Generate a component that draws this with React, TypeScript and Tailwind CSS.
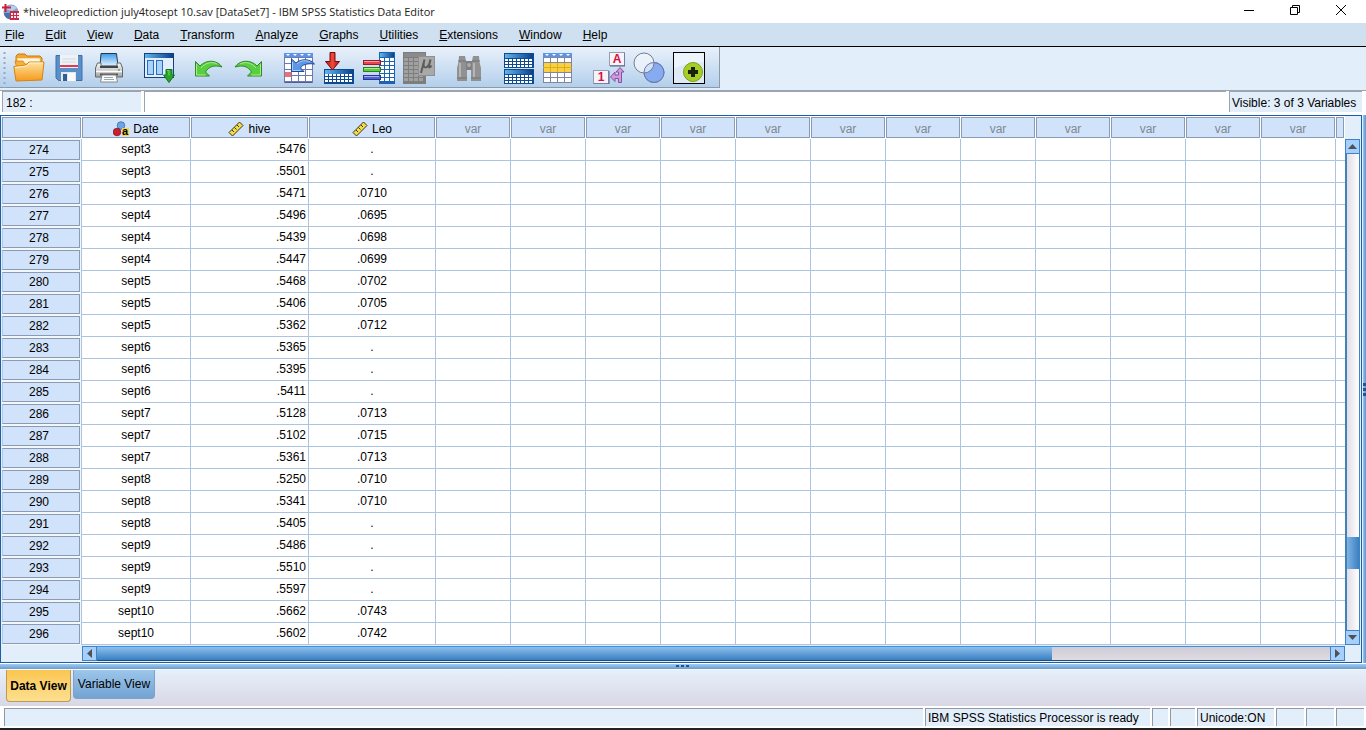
import React from "react";

type Row = { id: number; date: string; hive: string; leo: string };

const rows: Row[] = [
  { id: 274, date: "sept3", hive: ".5476", leo: "." },
  { id: 275, date: "sept3", hive: ".5501", leo: "." },
  { id: 276, date: "sept3", hive: ".5471", leo: ".0710" },
  { id: 277, date: "sept4", hive: ".5496", leo: ".0695" },
  { id: 278, date: "sept4", hive: ".5439", leo: ".0698" },
  { id: 279, date: "sept4", hive: ".5447", leo: ".0699" },
  { id: 280, date: "sept5", hive: ".5468", leo: ".0702" },
  { id: 281, date: "sept5", hive: ".5406", leo: ".0705" },
  { id: 282, date: "sept5", hive: ".5362", leo: ".0712" },
  { id: 283, date: "sept6", hive: ".5365", leo: "." },
  { id: 284, date: "sept6", hive: ".5395", leo: "." },
  { id: 285, date: "sept6", hive: ".5411", leo: "." },
  { id: 286, date: "sept7", hive: ".5128", leo: ".0713" },
  { id: 287, date: "sept7", hive: ".5102", leo: ".0715" },
  { id: 288, date: "sept7", hive: ".5361", leo: ".0713" },
  { id: 289, date: "sept8", hive: ".5250", leo: ".0710" },
  { id: 290, date: "sept8", hive: ".5341", leo: ".0710" },
  { id: 291, date: "sept8", hive: ".5405", leo: "." },
  { id: 292, date: "sept9", hive: ".5486", leo: "." },
  { id: 293, date: "sept9", hive: ".5510", leo: "." },
  { id: 294, date: "sept9", hive: ".5597", leo: "." },
  { id: 295, date: "sept10", hive: ".5662", leo: ".0743" },
  { id: 296, date: "sept10", hive: ".5602", leo: ".0742" },
];

const menus = [
  "File",
  "Edit",
  "View",
  "Data",
  "Transform",
  "Analyze",
  "Graphs",
  "Utilities",
  "Extensions",
  "Window",
  "Help",
];

const emptyCols = Array.from({ length: 12 }, (_, i) => i);

const Icon: React.FC<{ children: React.ReactNode }> = ({ children }) => (
  <svg width="32" height="32" viewBox="0 0 32 32" aria-hidden="true">
    {children}
  </svg>
);

// white cells on a coloured sheet, shared by the grid-like toolbar icons
const Cells: React.FC<{
  x: number;
  y: number;
  cols: number;
  rows: number;
  w: number;
  h: number;
  fill?: string;
}> = ({ x, y, cols, rows: n, w, h, fill = "#fff" }) => (
  <>
    {Array.from({ length: cols * n }, (_, i) => (
      <rect
        key={i}
        x={x + (i % cols) * (w + 1)}
        y={y + Math.floor(i / cols) * (h + 1)}
        width={w}
        height={h}
        fill={fill}
      />
    ))}
  </>
);

const Defs: React.FC = () => (
  <svg width="0" height="0" className="absolute" aria-hidden="true">
    <defs>
      <linearGradient id="orange" x1="0" y1="0" x2="0" y2="1">
        <stop offset="0" stopColor="#ffe2a0" />
        <stop offset="1" stopColor="#f59a1b" />
      </linearGradient>
      <linearGradient id="blueBar" x1="0" y1="0" x2="1" y2="0">
        <stop offset="0" stopColor="#5fb4ee" />
        <stop offset="1" stopColor="#0a3f8c" />
      </linearGradient>
      <linearGradient id="paper" x1="0" y1="0" x2="0" y2="1">
        <stop offset="0" stopColor="#3f9ae8" />
        <stop offset="1" stopColor="#e4f3ff" />
      </linearGradient>
      <linearGradient id="green" x1="0" y1="0" x2="0" y2="1">
        <stop offset="0" stopColor="#8ee05a" />
        <stop offset="1" stopColor="#1fa32a" />
      </linearGradient>
      <linearGradient id="grey" x1="0" y1="0" x2="0" y2="1">
        <stop offset="0" stopColor="#fafafa" />
        <stop offset="1" stopColor="#a4a4a4" />
      </linearGradient>
      <linearGradient id="blueArrow" x1="0" y1="0" x2="1" y2="1">
        <stop offset="0" stopColor="#2e63c0" />
        <stop offset="1" stopColor="#8ec4fa" />
      </linearGradient>
      <linearGradient id="red" x1="0" y1="0" x2="1" y2="0">
        <stop offset="0" stopColor="#b51212" />
        <stop offset="0.5" stopColor="#f04a3c" />
        <stop offset="1" stopColor="#a80e0e" />
      </linearGradient>
    </defs>
  </svg>
);

const OpenIcon = () => (
  <Icon>
    <path d="M3 9V4l2-2h7l2 2h13l2 2v6H3z" fill="#f7a62c" stroke="#c97a14" />
    <path d="M4 6h23l1 7H4z" fill="#fff6dc" stroke="#e0a24a" strokeWidth=".6" />
    <path d="M2 9h8l2 3h13v5H4z" fill="#f9b03a" stroke="#d68412" strokeWidth=".8" />
    <path d="M.8 14.500 13 13l3-3h15l-2 18-26 1z" fill="url(#orange)" stroke="#d68412" />
    <path d="M2 15.500 13.500 14l3-3h13.500" fill="none" stroke="#fff3cf" />
  </Icon>
);

const SaveIcon = () => (
  <Icon>
    <path d="M3 3.500h26v25H5.500L3 26z" fill="#5a8fc9" stroke="#3f6ea8" />
    <rect x="7" y="3" width="18" height="13" fill="#eef2f6" />
    <rect x="7" y="13" width="18" height="2" fill="#e23a55" />
    <path d="M9 7h14M9 10h14" stroke="#d3dae2" />
    <rect x="8" y="20" width="15" height="9" fill="#e3e8ec" />
    <rect x="10" y="22" width="4" height="7" fill="#335d93" />
    <rect x="15" y="21" width="7" height="8" fill="#fafafa" />
  </Icon>
);

const PrintIcon = () => (
  <Icon>
    <path d="M8 1.500h15.500L25 14H7z" fill="url(#paper)" stroke="#23384f" />
    <path d="M4.500 11H8v4h16v-4h3.500l2 5v9h-27v-9z" fill="url(#grey)" stroke="#666" />
    <rect x="7" y="14" width="18" height="2" fill="#444" />
    <path d="M3 19.500h26" stroke="#fff" strokeWidth="1.500" />
    <path d="M7 22.500h18" stroke="#555" strokeWidth="2" />
    <path d="M9 23h14l1.500 7H7.500z" fill="#fbfbfb" stroke="#888" />
    <path d="M11 25.500h9M11 27.500h10" stroke="#9aa" />
    <circle cx="26" cy="18" r="1" fill="#4b6" />
  </Icon>
);

const RecallIcon = () => (
  <Icon>
    <rect x="1.500" y="1.500" width="29" height="24" fill="#fff" stroke="#15407e" />
    <rect x="2" y="2" width="28" height="4" fill="url(#blueBar)" />
    <rect x="2" y="6" width="28" height="19" fill="#e4eefb" />
    <rect x="4.500" y="8.500" width="6" height="14" fill="#a8d3fa" stroke="#2a6cc0" />
    <rect x="13.500" y="8.500" width="6" height="14" fill="#a8d3fa" stroke="#2a6cc0" />
    <path d="M23 17.500h6v5.500h2.500L26 30.500 20.500 23H23z" fill="#27a52c" stroke="#14701c" />
    <path d="M24 18.500h2v5" fill="none" stroke="#7ed860" />
  </Icon>
);

const UndoIcon = () => (
  <Icon>
    <path
      d="M2.500 9.500v14.500h14l-4-4c3-5 8-7.500 16.500-5C24 7.500 13 7.500 7 14z"
      fill="#58cf3e"
      stroke="#35852f"
    />
    <path d="M3.500 12v11h9M8 16c4-5 11-7 16-4" fill="none" stroke="#a8ee8c" />
  </Icon>
);

const RedoIcon = () => (
  <Icon>
    <path
      d="M28.500 9.500v14.500h-14l4-4c-3-5-8-7.500-16.500-5C7 7.500 18 7.500 24 14z"
      fill="#58cf3e"
      stroke="#35852f"
    />
    <path d="M27.500 12v11h-9M23 16c-4-5-11-7-16-4" fill="none" stroke="#a8ee8c" />
  </Icon>
);

const GoToCaseIcon = () => (
  <Icon>
    <rect x="1" y="1" width="29" height="30" fill="#7078b0" />
    <rect x="1" y="1" width="29" height="4" fill="#5d95e6" />
    <Cells x={2} y={6} cols={4} rows={4} w={6} h={5} />
    <rect x="2" y="30" width="27" height="1" fill="#555b94" />
    <path d="M3 2h4l-2 2zM10 2h4l-2 2zM17 2h4l-2 2zM24 2h4l-2 2z" fill="#fff" />
    <rect x="2" y="20" width="6" height="5" fill="#e8707a" />
    <path
      d="M8.500 7v12.500H21l-3.500-3.500c1.500-3 6-5 14-4C27 6.500 18 6.500 13 11z"
      fill="#5d97e6"
      stroke="#1f4a9c"
    />
    <path d="M9.500 10v8.500h8M14 12c4-4 9-4 13-2" fill="none" stroke="#a5ccf8" />
  </Icon>
);

const ImportIcon = () => (
  <Icon>
    <rect x="1" y="17" width="30" height="15" fill="#0e4a92" />
    <rect x="2" y="18" width="28" height="4" fill="url(#blueBar)" />
    <Cells x={2} y={22} cols={7} rows={3} w={3} h={2} />
    <path d="M7 .5h5v9h4.500L9.500 18 2.500 9.500H7z" fill="url(#red)" stroke="#7d0a0a" />
  </Icon>
);

const GoToVariableIcon = () => (
  <Icon>
    <rect x="16" y="0" width="16" height="32" fill="#1d63b4" />
    <rect x="17" y="1" width="14" height="4" fill="url(#blueBar)" />
    <Cells x={17} y={6} cols={3} rows={6} w={4} h={3} />
    <rect x=".5" y="8.500" width="17" height="4" fill="#e34652" stroke="#a81522" />
    <rect x=".5" y="15.500" width="17" height="4" fill="#65c93e" stroke="#23851b" />
    <rect x=".5" y="23.500" width="17" height="4" fill="#5262cf" stroke="#2632a0" />
    <path d="M1 9.500h15M1 16.500h15M1 24.500h15" stroke="#fff" opacity=".5" />
  </Icon>
);

const StatsIcon = () => (
  <Icon>
    <rect x="0" y="0" width="23" height="32" fill="#7d7d7d" />
    <Cells x={1} y={6} cols={4} rows={6} w={4} h={3} fill="#a0a0a0" />
    <rect x="1" y="1" width="21" height="4" fill="#8b8b8b" />
    <rect x="15.500" y="4.500" width="16" height="19" fill="#a9a9a9" stroke="#8f8f8f" />
    <path
      d="M21.500 7.500 18 21M21 10c-2 7 3.500 7 5.500 1l1-3.500-1.500 6c-.5 2.500 1 2.500 2.500 0"
      fill="none"
      stroke="#5c5c5c"
      strokeWidth="2"
    />
  </Icon>
);

const FindIcon = () => (
  <Icon>
    <path d="M6 4h6l1 5 1 6v14H4V16l1.500-6zM20 4h6l.5 6L28 16v13H18V15l1-6z" fill="#919191" />
    <path d="M13 9h6v9h-6z" fill="#7f7f7f" />
    <path d="M7 11v14M21 11v14" stroke="#b5b5b5" strokeWidth="2" />
    <path d="M4 26h10M18 26h10M5 9h8M19 9h8" stroke="#747474" />
    <circle cx="16" cy="13" r="2" fill="#aaa" />
  </Icon>
);

const SplitIcon = () => (
  <Icon>
    <rect x="1" y="1" width="30" height="15" fill="#0e4a92" />
    <rect x="2" y="2" width="28" height="4" fill="url(#blueBar)" />
    <Cells x={2} y={7} cols={7} rows={3} w={3} h={2} />
    <rect x="1" y="17" width="30" height="15" fill="#0e4a92" />
    <rect x="2" y="18" width="28" height="4" fill="url(#blueBar)" />
    <Cells x={2} y={23} cols={7} rows={3} w={3} h={2} />
  </Icon>
);

const SelectIcon = () => (
  <Icon>
    <rect x="0" y="1" width="29" height="30" fill="#8285a0" />
    <rect x="0" y="1" width="29" height="4" fill="#5d95e6" />
    <Cells x={1} y={6} cols={4} rows={5} w={6} h={4} />
    <path d="M2 2h4l-2 2zM9 2h4l-2 2zM16 2h4l-2 2zM23 2h4l-2 2z" fill="#fff" />
    <rect x="1" y="11" width="27" height="9" fill="#f8d040" />
    <path d="M0 15.500h29M7.500 11v9M14.500 11v9M21.500 11v9" stroke="#d9ac24" />
  </Icon>
);

const LabelsIcon = () => (
  <Icon>
    <rect x="16.500" y=".5" width="15" height="13" fill="#f6f4f8" stroke="#9b9bb0" />
    <path d="M17 14h15V1" fill="none" stroke="#4e6484" />
    <text
      x="24"
      y="11"
      textAnchor="middle"
      fontFamily="Liberation Sans, sans-serif"
      fontSize="12"
      fontWeight="700"
      fill="#d6103f"
    >
      A
    </text>
    <rect x=".5" y="18.500" width="15" height="13" fill="#f6f4f8" stroke="#9b9bb0" />
    <path d="M1 32h15V19" fill="none" stroke="#4e6484" />
    <text
      x="8"
      y="29"
      textAnchor="middle"
      fontFamily="Liberation Sans, sans-serif"
      fontSize="12"
      fontWeight="700"
      fill="#d6103f"
    >
      1
    </text>
    <path
      d="M27 15.500 31 20h-2.500v10.500h-3v-4H22v3l-4.500-4.500 4.500-5v3h3.500V20H23z"
      fill="#cf9bdc"
      stroke="#8b4fa0"
    />
  </Icon>
);

const SetsIcon = () => (
  <Icon>
    <circle cx="21" cy="20.500" r="10" fill="#86abf0" stroke="#5b76b0" />
    <circle cx="11" cy="11" r="10" fill="#f3f7fc" fillOpacity=".7" stroke="#777d88" />
    <circle cx="21" cy="20.500" r="10" fill="none" stroke="#6c7fae" />
  </Icon>
);

const CustomIcon = () => (
  <Icon>
    <rect x=".5" y=".5" width="31" height="31" fill="#dfeaf6" stroke="#000" />
    <path d="M1 1h30v9q-15 0-30 6z" fill="#edf4fb" />
    <circle cx="20" cy="20" r="9.500" fill="#a6cf26" stroke="#7a9d1c" />
    <path d="M18 15h4v3h3v4h-3v3h-4v-3h-3v-4h3z" fill="#1c2410" />
  </Icon>
);

const toolGroups: { label: string; icon: React.FC }[][] = [
  [
    { label: "Open", icon: OpenIcon },
    { label: "Save", icon: SaveIcon },
    { label: "Print", icon: PrintIcon },
  ],
  [{ label: "Recall dialogs", icon: RecallIcon }],
  [
    { label: "Undo", icon: UndoIcon },
    { label: "Redo", icon: RedoIcon },
  ],
  [
    { label: "Go to case", icon: GoToCaseIcon },
    { label: "Go to data", icon: ImportIcon },
    { label: "Variables", icon: GoToVariableIcon },
    { label: "Descriptives", icon: StatsIcon },
  ],
  [{ label: "Find", icon: FindIcon }],
  [
    { label: "Split file", icon: SplitIcon },
    { label: "Select cases", icon: SelectIcon },
  ],
  [
    { label: "Value labels", icon: LabelsIcon },
    { label: "Variable sets", icon: SetsIcon },
    { label: "Customize toolbar", icon: CustomIcon },
  ],
];

const AppLogo = () => (
  <svg width="18" height="18" viewBox="0 0 18 18" aria-hidden="true">
    <circle cx="9" cy="9" r="7.500" fill="#7fa3cf" />
    <path d="M3 6a7.500 7.500 0 0 1 12-1l-5 3z" fill="#b9cfe8" />
    <path d="M2 11a7.500 7.500 0 0 0 7 5.500V10H2z" fill="#4f6ea8" />
    <path d="M3.500 1v8M0 4.500h9" stroke="#d01c3c" strokeWidth="2" />
    <rect x="8" y="8" width="9" height="9" fill="#c62a48" />
    <Cells x={9} y={10} cols={3} rows={2} w={2} h={2} fill="#fbe4e8" />
  </svg>
);

const NominalIcon = () => (
  <svg width="16" height="16" viewBox="0 0 16 16" aria-hidden="true">
    <circle cx="8" cy="4.500" r="3.800" fill="#6ea6e4" stroke="#2f5e9e" strokeWidth=".7" />
    <circle cx="4" cy="11" r="3.800" fill="#c8202c" stroke="#7d0d16" strokeWidth=".7" />
    <rect x="9" y="7" width="7" height="8" fill="#f4d64a" />
    <text
      x="12"
      y="14"
      textAnchor="middle"
      fontFamily="Liberation Sans, sans-serif"
      fontSize="11"
      fontWeight="700"
    >
      a
    </text>
  </svg>
);

const RulerIcon = () => (
  <svg width="16" height="16" viewBox="0 0 16 16" aria-hidden="true">
    <path d="M1 11.500 11.500 1 15 4.500 4.500 15z" fill="#f2dc4e" stroke="#3d3608" />
    <path d="m4 9 2 2M6.500 6.500l2 2M9 4l2 2" stroke="#3d3608" />
  </svg>
);

const HeaderCell: React.FC<{ children?: React.ReactNode; muted?: boolean }> = ({ children, muted }) => (
  <th scope="col" className="bg-white p-0 py-px font-normal">
    <div
      className={
        muted
          ? "mr-px flex h-[21px] items-center justify-center border border-[#8b9bb3] bg-[#d0e3fb] pt-0.5 text-[#808893]"
          : "mr-px flex h-[21px] items-center justify-center gap-1 border border-[#8b9bb3] bg-[#d0e3fb] pt-0.5"
      }
    >
      {children}
    </div>
  </th>
);

const ArrowButton: React.FC<{ label: string; d: string }> = ({ label, d }) => (
  <button
    type="button"
    aria-label={label}
    className="flex h-[15px] w-[15px] shrink-0 items-center justify-center border border-[#3f83c4] bg-[#a6cffb]"
  >
    <svg width="9" height="9" viewBox="0 0 9 9" aria-hidden="true">
      <path d={d} fill="#4c5258" />
    </svg>
  </button>
);

const TitleBar: React.FC = () => (
  <header className="flex h-[23px] shrink-0 items-center bg-white pl-[2px]">
    <AppLogo />
    <h1 className="ml-[3px] grow font-['Open_Sans','Noto_Sans',sans-serif] text-[11px] text-[#222]">
      *hiveleoprediction july4tosept 10.sav [DataSet7] - IBM SPSS Statistics Data Editor
    </h1>
    <div className="flex pr-0.5 pb-1">
      <button type="button" aria-label="Minimize" className="flex w-[46px] justify-center">
        <svg width="12" height="12" viewBox="0 0 12 12">
          <path d="M1 6.500h10" stroke="#000" />
        </svg>
      </button>
      <button type="button" aria-label="Restore" className="flex w-[46px] justify-center">
        <svg width="12" height="12" viewBox="0 0 12 12" fill="none" stroke="#000">
          <path d="M1.500 3.500h7v7h-7zM3.500 3.500v-2h7v7h-2" />
        </svg>
      </button>
      <button type="button" aria-label="Close" className="flex w-[46px] justify-center">
        <svg width="12" height="12" viewBox="0 0 12 12">
          <path d="m1 1 10 10M11 1 1 11" stroke="#000" />
        </svg>
      </button>
    </div>
  </header>
);

const MenuBar: React.FC = () => (
  <nav className="flex h-6 shrink-0 items-center gap-[21px] border-b border-black bg-[#cfe0f1] pl-[5px]">
    {menus.map((m) => (
      <button key={m} type="button">
        <span className="underline">{m[0]}</span>
        {m.slice(1)}
      </button>
    ))}
  </nav>
);

const ToolBar: React.FC = () => (
  <div className="flex h-[44px] shrink-0 border-b border-[#9aa5b1] bg-[#e3eefb]">
    <div className="mb-0.5 flex items-start border-r border-b border-[#8d99a6] bg-linear-to-b from-[#e9f1fb] to-[#b3cfeb] pt-[5px] pr-[10px]">
      <svg width="9" height="36" viewBox="0 0 9 36" aria-hidden="true">
        <path d="M4.500 0v36" stroke="#94a9c2" strokeWidth="2" strokeDasharray="2 3" />
      </svg>
      <div className="flex gap-[10px]">
        {toolGroups.map((group) => (
          <div key={group[0].label} className="flex">
            {group.map(({ label, icon: ToolIcon }) => (
              <button key={label} type="button" aria-label={label} className="flex w-10 justify-center">
                <ToolIcon />
              </button>
            ))}
          </div>
        ))}
      </div>
    </div>
  </div>
);

const CellEditor: React.FC = () => (
  <div className="flex h-6 shrink-0 gap-[3px] bg-white pr-1 pb-[3px] pl-[2px]">
    <label
      htmlFor="cell-value"
      className="flex w-[139px] items-center border-t border-l border-[#9aa5b1] bg-[#e3eefb] pt-px pl-[3px]"
    >
      182 :
    </label>
    <input id="cell-value" className="min-w-0 grow border-t border-l border-[#9aa5b1] bg-white px-1 outline-none" />
    <div className="flex w-[133px] items-center border-t border-l border-[#9aa5b1] bg-[#e3eefb] pt-px pl-[2px] whitespace-nowrap">
      Visible: 3 of 3 Variables
    </div>
  </div>
);

const DataTable: React.FC = () => (
  <table className="w-full table-fixed border-separate border-spacing-0 bg-white">
    <colgroup>
      <col className="w-[80px]" />
      <col className="w-[109px]" />
      <col className="w-[118px]" />
      <col className="w-[127px]" />
      {emptyCols.map((c) => (
        <col key={c} className="w-[75px]" />
      ))}
      <col />
    </colgroup>
    <thead>
      <tr className="h-[23px]">
        <HeaderCell />
        <HeaderCell>
          <NominalIcon />
          Date
        </HeaderCell>
        <HeaderCell>
          <RulerIcon />
          hive
        </HeaderCell>
        <HeaderCell>
          <RulerIcon />
          Leo
        </HeaderCell>
        {emptyCols.map((c) => (
          <HeaderCell key={c} muted>
            var
          </HeaderCell>
        ))}
        <HeaderCell />
      </tr>
    </thead>
    <tbody>
      {rows.map((r) => (
        <tr key={r.id} className="h-[22px]">
          <th scope="row" className="border-r border-[#aac4e2] bg-[#f2f7fd] p-0 pr-px font-normal">
            <div className="flex h-5 items-center justify-center border border-t-[#8b9bb3] border-r-[#8b9bb3] border-b-[#8b9bb3] border-l-[#b7c9de] bg-[#d0e3fb] pr-1">
              {r.id}
            </div>
          </th>
          <td className="border-r border-b border-[#aac4e2] p-0 pb-px text-center">{r.date}</td>
          <td className="border-r border-b border-[#aac4e2] p-0 pr-[2px] pb-px text-right">{r.hive}</td>
          <td className="border-r border-b border-[#aac4e2] p-0 pb-px text-center">{r.leo}</td>
          {emptyCols.map((c) => (
            <td key={c} className="border-r border-b border-[#aac4e2] p-0" />
          ))}
          <td className="border-b border-[#aac4e2] p-0" />
        </tr>
      ))}
    </tbody>
  </table>
);

const DataSheet: React.FC = () => (
  <main className="flex min-h-0 grow">
    <div className="flex min-w-0 grow flex-col border border-[#1c5fa8] bg-[#e3eefb] pl-px">
      <div className="flex min-h-0 grow">
        <div className="min-w-0 grow overflow-hidden">
          <DataTable />
        </div>
        {/* vertical scroll bar, starts under the column headers */}
        <div className="mr-px flex w-[15px] shrink-0 flex-col pt-[23px]">
          <ArrowButton label="Scroll up" d="M0 7 4.500 2 9 7z" />
          <div className="flex grow flex-col border-r border-l-2 border-r-[#3f83c4] border-l-[#3f83b8] bg-linear-to-r from-[#e2dde6] to-white">
            <div className="grow-[383]" />
            <div className="h-8 bg-linear-to-r from-[#7fb4e4] to-[#3c80c2]" />
            <div className="grow-[61]" />
          </div>
          <ArrowButton label="Scroll down" d="M0 2 4.500 7 9 2z" />
        </div>
      </div>
      <div className="flex h-[17px] shrink-0 pt-px pr-4 pb-px pl-20">
        <ArrowButton label="Scroll left" d="M7 0 2 4.500 7 9z" />
        <div className="flex h-[15px] grow border-y border-t-[#3f8fd8] border-b-[#174f88] bg-linear-to-b from-[#cfccd6] to-[#dedbe2]">
          <div className="grow-[955] bg-linear-to-b from-[#8cc0ee] to-[#3a7fc0]" />
          <div className="grow-[278]" />
        </div>
        <ArrowButton label="Scroll right" d="M2 0 7 4.500 2 9z" />
      </div>
    </div>
    <div className="flex w-1 shrink-0 flex-col items-end justify-center border-l border-[#e3eefb] bg-linear-to-r from-[#93c6f8] to-[#5d93c9]">
      <svg width="3" height="14" viewBox="0 0 3 14" aria-hidden="true">
        <path d="M0 1h3v3H0zM0 6h3v3H0zM0 11h3v3H0z" fill="#1f5593" />
      </svg>
    </div>
  </main>
);

const ViewTabs: React.FC = () => (
  <div className="flex h-[37px] shrink-0 items-start gap-[2px] border-t border-[#f4f8fd] bg-linear-to-b from-[#e6effa] to-[#d9d7e5] pl-1.5">
    <button
      type="button"
      className="h-8 w-[65px] rounded-b-[4px] border border-t-0 border-[#bb9a52] bg-linear-to-b from-[#fbc64e] to-[#fddf8f] pt-px font-bold whitespace-nowrap"
    >
      Data View
    </button>
    <button
      type="button"
      className="h-[29px] w-[82px] rounded-b-[4px] border border-t-0 border-[#7da3cd] bg-linear-to-b from-[#9cc6ea] to-[#74a3d3] whitespace-nowrap"
    >
      Variable View
    </button>
  </div>
);

const StatusCell: React.FC<{ width: string; children?: React.ReactNode }> = ({ width, children }) => (
  <div className={`${width} flex items-center border-t border-l border-[#8f9aa6] bg-[#e3eefb] pl-[2px] whitespace-nowrap`}>
    {children}
  </div>
);

const StatusBar: React.FC = () => (
  <footer className="flex h-[22px] shrink-0 gap-[2px] bg-white pt-[2px] pr-0.5 pb-[2px] pl-1">
    <StatusCell width="grow" />
    <StatusCell width="w-[225px]">IBM SPSS Statistics Processor is ready</StatusCell>
    <StatusCell width="w-4" />
    <StatusCell width="w-[25px]" />
    <StatusCell width="w-[77px]">Unicode:ON</StatusCell>
    <StatusCell width="w-7" />
    <StatusCell width="w-7" />
    <StatusCell width="w-7" />
  </footer>
);

const App: React.FC = () => {
  return (
    <div className="flex h-screen flex-col overflow-hidden bg-white font-['Liberation_Sans',Arial,sans-serif] text-[12px] leading-4 text-black">
      <Defs />
      <TitleBar />
      <MenuBar />
      <ToolBar />
      <CellEditor />
      <DataSheet />

      {/* horizontal splitter */}
      <div className="flex h-[6px] shrink-0 justify-center border-t border-white bg-linear-to-b from-[#9fcdf8] to-[#6c9bc8]">
        <svg width="14" height="4" viewBox="0 0 14 4" aria-hidden="true">
          <path d="M0 1h3v2H0zM5 1h3v2H5zM10 1h3v2h-3z" fill="#1f5593" />
        </svg>
      </div>

      <ViewTabs />
      <StatusBar />
      <div className="h-[2px] shrink-0 bg-[#222]" />
    </div>
  );
};

export default App;
